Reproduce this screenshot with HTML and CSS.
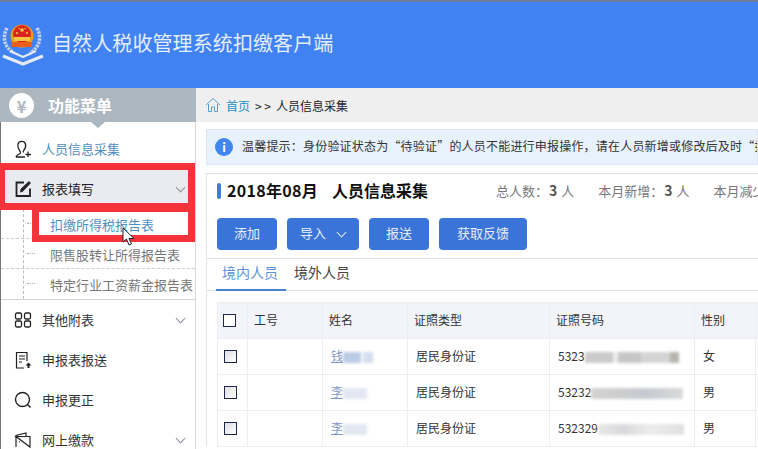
FILE: index.html
```html
<!DOCTYPE html>
<html lang="en">

<head>
    <meta charset="UTF-8">
    <meta name="viewport" content="width=device-width, initial-scale=1.0">
    <title>自然人税收管理系统扣缴客户端</title>
    <link rel="stylesheet" href="styles.css">
</head>

<body>
    <div class="page">
        <!-- 顶部 -->
        <header class="top">
            <svg class="emblem" width="46" height="48" viewBox="0 0 46 48">
                <g fill="none" stroke="#c3d2e6" stroke-width="3.500" stroke-dasharray="2.500 1">
                    <path d="M5 5C0 14 2 24 12 30" />
                    <path d="M35 5C40 14 38 24 28 30" />
                </g>
                <circle cx="20" cy="13" r="11.500" fill="#ef9a1c" />
                <circle cx="20" cy="11" r="9" fill="#d9261c" />
                <rect x="12" y="14" width="16" height="4" fill="#f6c544" />
                <rect x="10" y="19" width="20" height="5" rx="1" fill="#e8601c" />
                <g fill="#f7d04a">
                    <circle cx="20" cy="7" r="1.800" />
                    <circle cx="15" cy="10" r="1" />
                    <circle cx="25" cy="10" r="1" />
                    <circle cx="17" cy="5.500" r="0.700" />
                    <circle cx="23" cy="5.500" r="0.700" />
                </g>
                <g fill="none" stroke="#e3eaf4" stroke-linejoin="round">
                    <path d="M1 33L21 41L41 33" stroke-width="3" />
                    <path d="M8 28L21 34L34 28" stroke-width="2" />
                </g>
            </svg>
            <h1 class="top-title">自然人税收管理系统扣缴客户端</h1>
        </header>

        <div class="body">
            <!-- 左边菜单 -->
            <aside class="side">
                <div class="side-head">
                    <span class="yen">¥</span>
                    <span class="side-title">功能菜单</span>
                </div>
                <ul class="menu">
                    <li class="menu-item menu-link">
                        <svg class="ico" width="20" height="20" viewBox="0 0 20 20" fill="none" stroke="#222" stroke-width="1.300">
                            <path d="M3 18h9M3 18c0-2 3.500-2.500 4.500-4 .3-1-.2-1.500-1-2.500C5 9.500 4.500 7 5 5c.8-3.500 6.500-3.500 7.500 0 .4 2 0 4.500-1.500 6-.8 1-1 1.500-.5 2.500" />
                            <path d="M15 12.500v5.500M12.500 15.500h5.500" />
                        </svg>
                        <span>人员信息采集</span>
                    </li>
                    <li class="menu-item menu-on">
                        <svg class="ico" width="20" height="20" viewBox="0 0 20 20" fill="none" stroke="#222" stroke-width="1.800">
                            <path d="M11 3.500H3.500v13.500h13.500V9.500" />
                            <path d="M7.500 13L8 10l8-7.500 1.500 1.500-8 8.500z" fill="#222" stroke-width="0.800" />
                        </svg>
                        <span>报表填写</span>
                        <i class="chev"></i>
                    </li>
                    <li class="sub-list">
                        <div class="sub-item sub-on">扣缴所得税报告表</div>
                        <div class="sub-item">限售股转让所得报告表</div>
                        <div class="sub-item">特定行业工资薪金报告表</div>
                    </li>
                    <li class="menu-item">
                        <svg class="ico" width="20" height="20" viewBox="0 0 20 20" fill="none" stroke="#222" stroke-width="1.300">
                            <rect x="2.500" y="3" width="6" height="6" rx="1.500" />
                            <rect x="11.500" y="3" width="6" height="6" rx="1.500" />
                            <rect x="2.500" y="11" width="6" height="6" rx="1.500" />
                            <rect x="11.500" y="11" width="6" height="6" rx="1.500" />
                        </svg>
                        <span>其他附表</span>
                        <i class="chev"></i>
                    </li>
                    <li class="menu-item">
                        <svg class="ico" width="20" height="20" viewBox="0 0 20 20" fill="none" stroke="#222" stroke-width="1.200">
                            <path d="M11 18H3.500V2.500h10.500V11" />
                            <path d="M6 6h6M6 9h6M6 12h3" />
                            <path d="M15.500 12.500l3 3h-2v2.500h-2v-2.500h-2z" fill="#222" stroke="none" />
                        </svg>
                        <span>申报表报送</span>
                    </li>
                    <li class="menu-item">
                        <svg class="ico" width="20" height="20" viewBox="0 0 20 20" fill="none" stroke="#222" stroke-width="1.400">
                            <circle cx="9.500" cy="9.500" r="7" />
                            <path d="M14.500 14.500l3 3" />
                        </svg>
                        <span>申报更正</span>
                    </li>
                    <li class="menu-item">
                        <svg class="ico" width="20" height="20" viewBox="0 0 20 20" fill="none" stroke="#222" stroke-width="1.200">
                            <path d="M3 17V5.500l10-2.500v3M3 6.500h14V17z" />
                            <path d="M6 12h1" />
                        </svg>
                        <span>网上缴款</span>
                        <i class="chev"></i>
                    </li>
                </ul>
            </aside>

            <!-- 右边内容 -->
            <main class="main">
                <div class="crumb">
                    <svg width="16" height="16" viewBox="0 0 16 16" fill="none" stroke="#5b9fc9" stroke-width="1">
                        <path d="M1 8L8 1.500 15 8M3.500 7v7.500h3V10h3v4.500h3V7" />
                    </svg>
                    <a class="crumb-home">首页</a>
                    <span class="crumb-sep">&gt; &gt;</span>
                    <span>人员信息采集</span>
                </div>

                <div class="notice">
                    <span class="notice-i">i</span>
                    <span class="notice-text">温馨提示：身份验证状态为“待验证”的人员不能进行申报操作，请在人员新增或修改后及时“报送”</span>
                </div>

                <section class="panel">
                    <div class="panel-head">
                        <i class="mark"></i>
                        <h2 class="panel-title">2018年08月<span class="panel-name">人员信息采集</span></h2>
                        <div class="stats">
                            <span>总人数：<b>3</b> 人</span>
                            <span>本月新增：<b>3</b> 人</span>
                            <span>本月减少：<b>0</b> 人</span>
                        </div>
                    </div>

                    <div class="btns">
                        <button class="btn w60">添加</button>
                        <button class="btn btn-drop"><span>导入</span><i class="chev chev-w"></i></button>
                        <button class="btn w60">报送</button>
                        <button class="btn w88">获取反馈</button>
                    </div>

                    <div class="tabs">
                        <span class="tab tab-on">境内人员</span>
                        <span class="tab">境外人员</span>
                    </div>

                    <table class="tbl">
                        <colgroup>
                            <col class="c1"><col class="c2"><col class="c3"><col class="c4"><col class="c5"><col class="c6"><col>
                        </colgroup>
                        <thead>
                            <tr>
                                <th><i class="chk chk-head"></i></th>
                                <th>工号</th>
                                <th>姓名</th>
                                <th>证照类型</th>
                                <th>证照号码</th>
                                <th>性别</th>
                                <th></th>
                            </tr>
                        </thead>
                        <tbody>
                            <tr>
                                <td><i class="chk"></i></td>
                                <td></td>
                                <td><a class="name">钱</a><i class="smear smear-blue"></i></td>
                                <td>居民身份证</td>
                                <td>5323<i class="smear smear-id"></i></td>
                                <td>女</td>
                                <td></td>
                            </tr>
                            <tr>
                                <td><i class="chk"></i></td>
                                <td></td>
                                <td><a class="name">李</a><i class="smear smear-pale"></i></td>
                                <td>居民身份证</td>
                                <td>53232<i class="smear smear-id2"></i></td>
                                <td>男</td>
                                <td></td>
                            </tr>
                            <tr>
                                <td><i class="chk"></i></td>
                                <td></td>
                                <td><a class="name">李</a><i class="smear smear-pale"></i></td>
                                <td>居民身份证</td>
                                <td>532329<i class="smear smear-id3"></i></td>
                                <td>男</td>
                                <td></td>
                            </tr>
                        </tbody>
                    </table>
                </section>
            </main>
        </div>

        <!-- 红框标注和鼠标 -->
        <div class="mark-box mark-a"></div>
        <div class="mark-box mark-b"></div>
        <svg class="cursor" width="14" height="20" viewBox="0 0 14 20">
            <path d="M1 1v14l3.500-3 2.500 6 2.500-1-2.500-5.500H12z" fill="#fff" stroke="#222" stroke-width="1" />
        </svg>
    </div>
</body>

</html>
```

FILE: styles.css
```css
* {
    box-sizing: border-box;
}

html,
body {
    margin: 0;
    height: 100%;
    overflow: hidden;
    background-color: #fff;
    font-family: "Noto Sans CJK SC", "Liberation Sans", sans-serif;
    font-size: 12px;
    color: #333;
}

ul {
    margin: 0;
    padding: 0;
    list-style: none;
}

.page {
    position: relative;
    width: 758px;
    height: 449px;
    overflow: hidden;
}

/* 顶部 */
.top {
    height: 88px;
    padding: 21px 0 0 2px;
    display: flex;
    align-items: flex-start;
    background-color: #4182f3;
    border-top: 2px solid #6b7d99;
}

.emblem {
    margin-right: 4px;
}

.top-title {
    margin: 6px 0 0;
    font-size: 20px;
    font-weight: 400;
    line-height: 28px;
    letter-spacing: 0.1px;
    color: #e4eefc;
}

.body {
    display: flex;
    height: 361px;
}

/* 左边菜单 */
.side {
    width: 196px;
    flex: none;
    border-left: 1px solid #777;
    border-right: 1px solid #d8d8d8;
}

.side-head {
    position: relative;
    height: 34px;
    margin-left: -1px;
    margin-right: -1px;
    padding-left: 9px;
    display: flex;
    align-items: center;
    background-color: #adb7bf;
}

.side-head::after {
    content: "";
    position: absolute;
    left: 91px;
    top: 34px;
    border-left: 7px solid transparent;
    border-right: 7px solid transparent;
    border-top: 6px solid #adb7bf;
}

.yen {
    width: 25px;
    height: 25px;
    border-radius: 50%;
    background-color: #fff;
    color: #adb7bf;
    font-size: 17px;
    font-weight: 700;
    line-height: 25px;
    text-align: center;
}

.side-title {
    margin-left: 14px;
    font-size: 16px;
    font-weight: 700;
    color: #fff;
}

.menu {
    padding-top: 7px;
}

.menu-item {
    height: 40px;
    padding-left: 12px;
    display: flex;
    align-items: center;
    font-size: 13px;
    color: #333;
}

.menu-item > span {
    flex: 1;
    padding-bottom: 1px;
}

.ico {
    margin-right: 9px;
    flex: none;
}

.menu-link {
    color: #4f8fbe;
}

.menu-on {
    background-color: #e9ebf1;
    color: #222;
}

.chev {
    display: block;
    width: 7px;
    height: 7px;
    margin: -3px 11px 0 0;
    border-right: 1px solid #8a929c;
    border-bottom: 1px solid #8a929c;
    transform: rotate(45deg);
}

.sub-list {
    position: relative;
    border-bottom: 1px solid #d4d4d4;
}

.sub-list::before {
    content: "";
    position: absolute;
    left: 22px;
    top: 0;
    bottom: 0;
    border-left: 1px dashed #bbb;
}

.sub-item {
    position: relative;
    height: 30px;
    padding-left: 49px;
    font-size: 13px;
    line-height: 31px;
    white-space: nowrap;
    color: #777;
    border-bottom: 1px dashed #ccc;
}

.sub-item:last-child {
    border-bottom: 0;
}

.sub-item::before {
    content: "";
    position: absolute;
    left: 26px;
    top: 14px;
    width: 8px;
    border-top: 1px dotted #aaa;
}

.sub-on {
    color: #4f8fbe;
}

/* 右边内容 */
.main {
    flex: 1;
    min-width: 0;
}

.crumb {
    height: 34px;
    padding-left: 9px;
    display: flex;
    align-items: center;
    background-color: #efefef;
    color: #222;
    white-space: nowrap;
}

.crumb-home {
    margin-left: 5px;
    color: #1f8fc4;
}

.crumb-sep {
    margin: 0 5px 0 5px;
}

.notice {
    height: 36px;
    margin: 7px 0 8px 10px;
    padding-left: 8px;
    display: flex;
    align-items: center;
    overflow: hidden;
    white-space: nowrap;
    background-color: #e8f2fc;
    border: 1px solid #dde7f1;
}

.notice-i {
    width: 18px;
    height: 18px;
    margin-right: 9px;
    flex: none;
    border-radius: 50%;
    background-color: #3f86ee;
    color: #fff;
    font-size: 12px;
    font-weight: 700;
    line-height: 18px;
    text-align: center;
}

.notice-text {
    padding-bottom: 3px;
    letter-spacing: 0.2px;
}

.panel {
    margin-left: 10px;
    padding-left: 10px;
    border-left: 1px solid #e2e2e2;
    border-top: 1px solid #e2e2e2;
}

.panel-head {
    height: 44px;
    padding-top: 7px;
    display: flex;
    align-items: flex-start;
}

.mark {
    width: 4px;
    height: 16px;
    flex: none;
    margin: 2px 6px 0 0;
    border-radius: 2px;
    background-color: #3f7bdc;
}

.panel-title {
    width: 269px;
    flex: none;
    margin: -1px 0 0;
    font-size: 16px;
    font-weight: 700;
    line-height: 20px;
    letter-spacing: 0.3px;
    white-space: nowrap;
    color: #111;
}

.panel-name {
    margin-left: 14px;
    letter-spacing: 0;
}

.stats {
    display: flex;
    gap: 24px;
    margin-top: -1px;
    font-size: 13px;
    line-height: 20px;
    white-space: nowrap;
    color: #777;
}

.stats b {
    margin: 0 1px;
    font-size: 14px;
    color: #555;
}

.btns {
    height: 41px;
    display: flex;
    gap: 10px;
    align-items: flex-start;
    margin-left: -10px;
    padding-left: 10px;
    border-bottom: 1px solid #e0e0e0;
}

.btn {
    height: 32px;
    padding: 0 0 3px;
    border: 0;
    border-radius: 4px;
    background-color: #3b74d8;
    font-family: inherit;
    font-size: 13px;
    color: #e6eefa;
}

.w60 {
    width: 60px;
}

.w88 {
    width: 88px;
}

.btn-drop {
    width: 72px;
    padding: 0 0 0 13px;
    display: flex;
    align-items: center;
}

.btn-drop span {
    padding-bottom: 3px;
}

.chev-w {
    margin: -3px 0 0 12px;
    border-color: #dce7f7;
}

.tabs {
    height: 32px;
    margin-bottom: 11px;
    margin-left: -10px;
    display: flex;
    border-bottom: 1px solid #e0e0e0;
}

.tab {
    height: 32px;
    padding: 0 7px;
    margin-right: 1px;
    font-size: 14px;
    line-height: 27px;
    white-space: nowrap;
    color: #444;
}

.tabs .tab:first-child {
    margin-left: 9px;
    width: 70px;
    padding: 0 6px;
    color: #5f93d8;
    border-bottom: 2px solid #4a7fd6;
}

.tbl {
    width: 700px;
    table-layout: fixed;
    border-collapse: collapse;
}

.c1 { width: 30px; }
.c2 { width: 75px; }
.c3 { width: 85px; }
.c4 { width: 142px; }
.c5 { width: 145px; }
.c6 { width: 61px; }

.tbl th,
.tbl td {
    height: 36px;
    padding: 0 8px 3px;
    font-size: 12px;
    font-weight: 400;
    text-align: left;
    white-space: nowrap;
    border: 1px solid #edeef2;
}

.tbl th {
    padding: 0 6px 3px;
    background-color: #f2f4f9;
    color: #333;
}

.tbl th:first-child {
    padding: 0 0 0 5px;
}

.tbl td:first-child {
    padding: 0 0 0 6px;
}

.chk {
    display: block;
    width: 13px;
    height: 13px;
    border: 1px solid #1c2450;
    background: linear-gradient(135deg, #dedede, #fff);
}

.chk-head {
    background: #fff;
}

.name {
    color: #7f97c6;
    text-decoration: underline;
}

.smear {
    display: inline-block;
    height: 11px;
    vertical-align: -2px;
    filter: blur(1.500px);
}

.smear-blue {
    width: 30px;
    background: linear-gradient(90deg, #bccbe6 0 60%, #fff 60% 68%, #d5deef 68%);
}

.smear-pale {
    width: 24px;
    background: #e2e7f2;
}

.smear-id {
    width: 94px;
    background: linear-gradient(90deg, #cbcbcb 0 30%, #eee 30% 35%, #c6c6c6 35% 60%, #d4d4d4 60% 90%, #b8b4ae 90%);
}

.smear-id2 {
    width: 92px;
    background: linear-gradient(90deg, #d4d2ce, #c6c9d0 60%, #d8dadb);
}

.smear-id3 {
    width: 86px;
    background: linear-gradient(90deg, #e8e8e8, #d9d9dc 30%, #ececec 60%, #e0e0e0);
}

/* 红框标注 */
.mark-box {
    position: absolute;
    border: 7px solid #f5333a;
    pointer-events: none;
}

.mark-a {
    left: 0;
    top: 163px;
    width: 195px;
    height: 47px;
    border-left-width: 5px;
}

.mark-b {
    left: 32px;
    top: 205px;
    width: 163px;
    height: 37px;
}

.cursor {
    position: absolute;
    left: 122px;
    top: 227px;
}
```
